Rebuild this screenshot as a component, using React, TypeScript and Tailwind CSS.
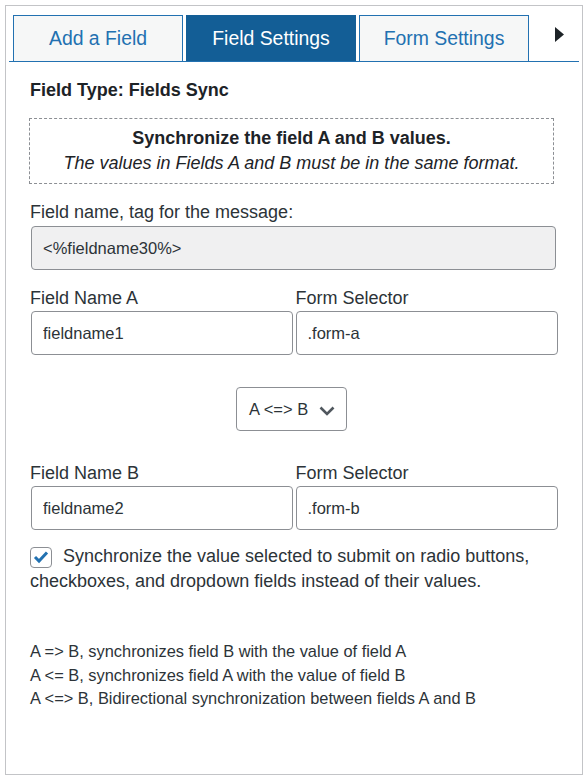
import React from "react";

function Tab({ label, active }: { label: string; active?: boolean }) {
  return (
    <div
      className={
        active
          ? "w-[170px] h-[46px] flex items-center justify-center border border-b-0 border-[#135e96] bg-[#135e96] text-white text-[19.4px]"
          : "w-[170px] h-[46px] flex items-center justify-center border border-b-0 border-[#2271b1] bg-[#f6f7f7] text-[#2271b1] text-[19.4px]"
      }
    >
      {label}
    </div>
  );
}

function TextInput({ value, className }: { value: string; className?: string }) {
  return (
    <input
      readOnly
      value={value}
      className={
        "block h-[44px] w-full rounded-[4px] border border-[#8c8f94] bg-white px-[11px] text-[16.5px] text-[#2c3338] outline-none " +
        (className ?? "")
      }
    />
  );
}

export default function App() {
  return (
    <div className="w-[588px] h-[781px] bg-white pt-[5px] pl-[5px] font-['Liberation_Sans',Arial,sans-serif] text-[#2c3338]">
      <div className="w-[578px] h-[770px] border border-[#c3c4c7] pt-[9px]">
        {/* Tabs */}
        <div className="mx-[3px] flex items-start gap-x-[3px] border-b border-[#2271b1] pl-[4px]">
          <Tab label="Add a Field" />
          <Tab label="Field Settings" active />
          <Tab label="Form Settings" />
          <div className="ml-auto mr-[15px] mt-[12px]">
            <svg width="9" height="15" viewBox="0 0 9 15">
              <polygon points="0,0 9,7.5 0,15" fill="#1d2327" />
            </svg>
          </div>
        </div>

        {/* Content */}
        <div className="ml-[24px] w-[528px]">
          <div className="mt-[16px] text-[18px] font-bold leading-[24px] text-[#1d2327]">
            Field Type: Fields Sync
          </div>

          <div className="mt-[16px] -ml-[1px] w-[525px] border border-dashed border-[#8c8f94] py-[7px] text-center text-[18px] leading-[25px] text-[#1d2327]">
            <div className="font-bold">Synchronize the field A and B values.</div>
            <div className="italic">The values in Fields A and B must be in the same format.</div>
          </div>

          <div className="mt-[16px] text-[18px] leading-[24px]">Field name, tag for the message:</div>
          <div className="mt-[2px] ml-[1px] w-[525px]">
            <TextInput value="<%fieldname30%>" className="!bg-[#f0f0f1]" />
          </div>

          <div className="mt-[16px] grid grid-cols-2 gap-x-[3px]">
            <div>
              <div className="text-[18px] leading-[24px]">Field Name A</div>
              <div className="mt-[1px] ml-[1px]">
                <TextInput value="fieldname1" />
              </div>
            </div>
            <div>
              <div className="text-[18px] leading-[24px]">Form Selector</div>
              <div className="mt-[1px]">
                <TextInput value=".form-a" />
              </div>
            </div>
          </div>

          <div className="mt-[32px] flex">
            <div className="ml-[206px] flex h-[44px] w-[111px] items-center rounded-[4px] border border-[#8c8f94] bg-white pl-[12px] pr-[11px] text-[16.5px] text-[#2c3338]">
              <span>A &lt;=&gt; B</span>
              <svg className="ml-auto mt-[3px]" width="16" height="10" viewBox="0 0 16 10">
                <polyline points="1.5,1.5 8,8 14.5,1.5" fill="none" stroke="#50575e" strokeWidth="2.6" />
              </svg>
            </div>
          </div>

          <div className="mt-[30px] grid grid-cols-2 gap-x-[3px]">
            <div>
              <div className="text-[18px] leading-[24px]">Field Name B</div>
              <div className="mt-[1px] ml-[1px]">
                <TextInput value="fieldname2" />
              </div>
            </div>
            <div>
              <div className="text-[18px] leading-[24px]">Form Selector</div>
              <div className="mt-[1px]">
                <TextInput value=".form-b" />
              </div>
            </div>
          </div>

          <div className="mt-[14px] text-[18px] leading-[25px]">
            <span className="mr-[11px] inline-flex h-[21px] w-[22px] items-center justify-center rounded-[4px] border border-[#8c8f94] bg-white align-[-2px]">
              <svg width="16" height="14" viewBox="0 0 16 14">
                <polyline points="2,7 6,11 14,2.5" fill="none" stroke="#2271b1" strokeWidth="3" />
              </svg>
            </span>
            Synchronize the value selected to submit on radio buttons, checkboxes, and dropdown fields instead of their values.
          </div>

          <div className="mt-[46px] text-[16.4px] leading-[23.5px] text-[#2c3338]">
            <div>A =&gt; B, synchronizes field B with the value of field A</div>
            <div>A &lt;= B, synchronizes field A with the value of field B</div>
            <div>A &lt;=&gt; B, Bidirectional synchronization between fields A and B</div>
          </div>
        </div>
      </div>
    </div>
  );
}
